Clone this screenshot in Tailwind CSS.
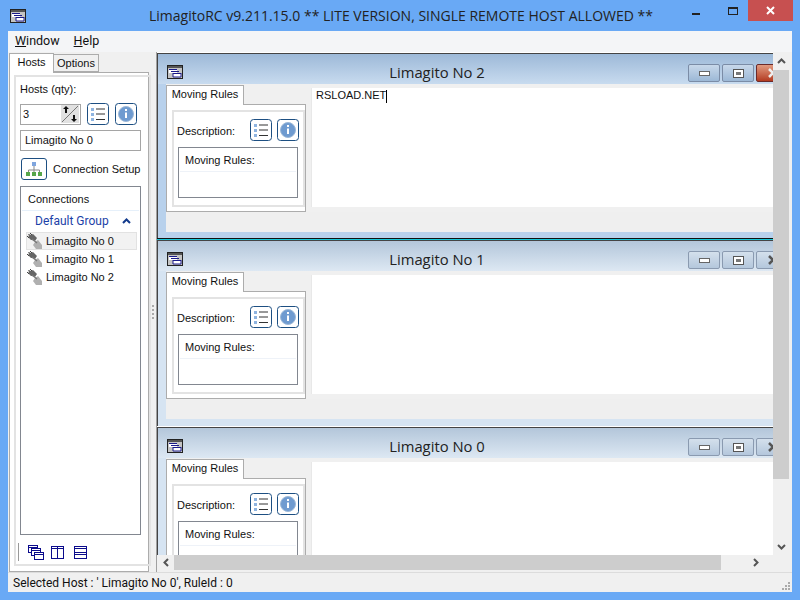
<!DOCTYPE html>
<html lang="en">
<head>
  <meta charset="UTF-8" />
  <title>LimagitoRC</title>
  <script src="https://cdn.jsdelivr.net/npm/@tailwindcss/browser@4"></script>
</head>
<body class="w-[800px] h-[600px] overflow-hidden bg-[#69a9f5] font-['Liberation_Sans',sans-serif] text-[11px] leading-none text-[#111]">
  <svg width="0" height="0" class="absolute">
    <defs>
      <symbol id="app" viewBox="0 0 16 14">
        <rect x=".5" y=".5" width="15" height="13" fill="#c4c4c4" stroke="#222"/>
        <rect x="1" y="1" width="14" height="2" fill="#555"/>
        <rect x="2" y="4" width="8" height="4" fill="#fff"/>
        <rect x="6" y="8" width="8" height="4" fill="#fff"/>
        <path d="M2 4.500h8M4 6.500h8M6 8.500h8M6 12h8" stroke="#1a1a8a"/>
        <path d="M6 8v4M14 8v4" stroke="#1a1a8a"/>
      </symbol>
      <symbol id="list" viewBox="0 0 22 22">
        <rect x=".5" y=".5" width="21" height="21" rx="3" fill="#fff" stroke="#1d4f82"/>
        <path d="M4 5h3v3H4zM4 10h3v3H4zM4 15h3v3H4z" fill="#8fb4e0"/>
        <path d="M9 6h9M9 11h9M9 16.500h9" stroke="#333"/>
      </symbol>
      <symbol id="info" viewBox="0 0 22 22">
        <rect x=".5" y=".5" width="21" height="21" rx="3" fill="#fff" stroke="#1d4f82"/>
        <circle cx="11" cy="11" r="7.500" fill="#6f9bd0" stroke="#9db9d8"/>
        <path d="M10 6h2v2h-2zM10 9.500h2V15h-2z" fill="#fff"/>
      </symbol>
      <symbol id="plug" viewBox="0 0 16 17">
        <path d="M2 1l2 1 2-1 4 4-2 3-3-1-1 0-3-3 1-1-1-2z" fill="#666"/>
        <path d="M0 3l2 2M3 0l2 2" stroke="#444"/>
        <path d="M8 9l3-2 4 5v4H9l-3-4z" fill="#b0b0b0"/>
        <path d="M5 6l5 4" stroke="#777" stroke-width="1.500"/>
      </symbol>
    </defs>
  </svg>

  <header class="h-[31px] flex items-center relative">
    <svg class="w-4 h-[14px] ml-[10px]"><use href="#app"/></svg>
    <div class="absolute left-0 right-0 top-[9px] text-center text-[14px] font-['Open_Sans'] text-[#222] pl-[2px]">LimagitoRC v9.211.15.0 ** LITE VERSION, SINGLE REMOTE HOST ALLOWED **</div>
    <div class="ml-auto flex items-start self-start mr-[7px]">
      <div class="w-[45px] h-[21px] flex items-center justify-center"><div class="w-2 h-[2px] bg-[#222] mt-[6px]"></div></div>
      <div class="w-[30px] h-[21px] flex items-center justify-center"><div class="w-[10px] h-2 border border-[#222] border-t-2"></div></div>
      <div class="w-[45px] h-[21px] bg-[#c75050] flex items-center justify-center text-white">
        <svg width="9" height="9" viewBox="0 0 9 9"><path d="M1 1l7 7M8 1l-7 7" stroke="#fff" stroke-width="2"/></svg>
      </div>
    </div>
  </header>

  <div class="mx-2 h-[561px] bg-[#f0f0f0] flex flex-col">
    <nav class="h-[21px] bg-[#f4f5f7] flex items-center pl-[7px] gap-[14px] font-['Roboto'] text-[12.5px] shrink-0">
      <span><span class="underline">W</span>indow</span>
      <span><span class="underline">H</span>elp</span>
    </nav>

    <div class="flex-1 flex min-h-0">
      <aside class="w-[141px] shrink-0 pb-[1px] flex flex-col">
        <div class="flex items-end h-[20px] pl-[1px]">
          <div class="w-[45px] h-[20px] pb-[3px] bg-white border border-b-0 border-[#acacac] flex items-center justify-center relative top-[1px] z-10">Hosts</div>
          <div class="w-[45px] h-[18px] pt-[1px] bg-[#f0f0f0] border border-l-0 border-[#acacac] flex items-center justify-center">Options</div>
        </div>
        <div class="flex-1 bg-white border border-[#acacac] ml-[1px] px-[4px] pt-[2px] pb-[5px] flex">
          <div class="flex-1 border-2 border-[#e3e3e3] px-[4px] flex flex-col">
            <div class="pt-[7px] h-[22px]">Hosts (qty):</div>
            <div class="flex items-center h-[24px] mt-[3px]">
              <div class="w-[61px] h-[21px] border border-[#a5a5a5] flex items-center pl-[2px] pr-[1px] justify-between">
                <span>3</span>
                <svg width="18" height="18" viewBox="0 0 18 18"><rect width="18" height="18" fill="#e1e1e1"/><path d="M17 1L1 17" stroke="#777"/><path d="M5 1l3 3H6v4H4V4H2zM13 17l3-3h-2v-4h-2v4h-2z" fill="#111"/></svg>
              </div>
              <svg class="w-[22px] h-[22px] ml-[6px]"><use href="#list"/></svg>
              <svg class="w-[22px] h-[22px] ml-[6px]"><use href="#info"/></svg>
            </div>
            <div class="h-[21px] mt-[4px] border border-[#a5a5a5] flex items-center pl-[4px] w-[121px]">Limagito No 0</div>
            <div class="flex items-center h-[24px] mt-[6px] w-[125px]">
              <div class="w-[26px] h-[22px] rounded-[3px] border border-[#1d4f82] flex items-center justify-center ml-[1px]">
                <svg width="18" height="16" viewBox="0 0 18 16"><path d="M9 5v4M3.500 11V9h11v2M9 9v2" stroke="#888" fill="none"/><rect x="7" y="1" width="4" height="4" fill="#7fa5dd"/><rect x="1" y="11" width="4" height="4" fill="#57a64a"/><rect x="7" y="11" width="4" height="4" fill="#57a64a"/><rect x="13" y="11" width="4" height="4" fill="#57a64a"/></svg>
              </div>
              <span class="ml-[6px] pt-[1px] whitespace-nowrap">Connection Setup</span>
            </div>
            <div class="mt-[5px] w-[121px] h-[349px] border border-[#828790] flex flex-col px-[1px]">
              <div class="h-[24px] pl-[6px] pt-[1px] flex items-center border-b border-[#e6f0fa]">Connections</div>
              <div class="h-[20px] flex items-center pl-[13px] text-[#1c3fa8] font-['Roboto'] text-[12px]">
                Default Group
                <svg class="ml-auto mr-[8px]" width="9" height="6" viewBox="0 0 9 6"><path d="M1 5l3.500-3.500L8 5" stroke="#123a8c" stroke-width="2" fill="none"/></svg>
              </div>
              <div class="mt-[1px] ml-[4px] w-[111px] h-[18px] flex items-center bg-[#f2f2f2] border border-[#e2e2e2]"><svg class="w-4 h-[17px] shrink-0"><use href="#plug"/></svg><span class="ml-[3px]">Limagito No 0</span></div>
              <div class="ml-[4px] w-[111px] h-[18px] flex items-center border border-transparent"><svg class="w-4 h-[17px] shrink-0"><use href="#plug"/></svg><span class="ml-[3px]">Limagito No 1</span></div>
              <div class="ml-[4px] w-[111px] h-[18px] flex items-center border border-transparent"><svg class="w-4 h-[17px] shrink-0"><use href="#plug"/></svg><span class="ml-[3px]">Limagito No 2</span></div>
            </div>
            <div class="flex items-center h-[24px] mt-[5px] -ml-[2px]">
              <div class="w-[1px] h-[18px] bg-[#999]"></div>
              <svg class="ml-[9px]" width="16" height="15" viewBox="0 0 16 15" fill="#fff" stroke="#0b0b8c"><rect x=".5" y=".5" width="9" height="7"/><path d="M.5 2.500h9"/><rect x="3.500" y="3.500" width="9" height="7"/><path d="M3.500 5.500h9"/><rect x="6.500" y="7.500" width="9" height="7"/><path d="M6.500 9.500h9"/></svg>
              <svg class="ml-[7px]" width="13" height="13" viewBox="0 0 13 13" fill="#fff" stroke="#0b0b8c"><rect x=".5" y=".5" width="12" height="12"/><path d="M.5 2.500h12M6.500 .5v12"/></svg>
              <svg class="ml-[10px]" width="13" height="13" viewBox="0 0 13 13" fill="#fff" stroke="#0b0b8c"><rect x=".5" y=".5" width="12" height="12"/><path d="M.5 2.500h12M.5 6.500h12M.5 8.500h12"/></svg>
            </div>
          </div>
        </div>
      </aside>

      <div class="w-[7px] shrink-0 flex items-center justify-center">
        <div class="w-[2px] h-[14px] border-l-2 border-dotted border-[#aaa]"></div>
      </div>

      <!-- mdi client -->
      <main class="flex-1 min-w-0 relative overflow-hidden border-l border-[#a0a0a0] bg-[#f0f0f0]">
        <div class="absolute left-0 top-0 w-[616px] h-[503px] bg-white overflow-hidden">

          <section class="absolute left-0 top-[1px] w-[632px] h-[185px] bg-[#b8d1ec] border-t border-l border-[#444]">
            <div class="h-[30px] bg-gradient-to-b from-[#9db9d8] to-[#c8dbef] flex items-center relative">
              <svg class="w-4 h-[14px] ml-[9px] mt-[6px]"><use href="#app"/></svg>
              <div class="absolute left-0 w-[558px] text-center top-[11px] text-[14.8px] font-['Open_Sans'] text-[#222]">Limagito No 2</div>
              <div class="absolute left-[530px] top-[10px] flex gap-[2px]">
                <div class="w-[32px] h-[18px] rounded-[2px] border border-[#7b8ca6] bg-gradient-to-b from-[#c8d8ea] to-[#9cb8d6] flex items-center justify-center"><div class="w-[11px] h-[5px] bg-white border border-[#666]"></div></div>
                <div class="w-[32px] h-[18px] rounded-[2px] border border-[#7b8ca6] bg-gradient-to-b from-[#c8d8ea] to-[#9cb8d6] flex items-center justify-center"><div class="w-[11px] h-[9px] bg-white border border-[#555] flex items-center justify-center"><div class="w-[5px] h-[3px] bg-[#777]"></div></div></div>
                <div class="w-[32px] h-[18px] rounded-[2px] border border-[#6b2a2a] bg-gradient-to-b from-[#e09a80] to-[#b33a20]"><svg class="ml-[11px] mt-[3px]" width="10" height="10" viewBox="0 0 10 10"><path d="M1 1l8 8M9 1l-8 8" stroke="#eee" stroke-width="2.500"/></svg></div>
              </div>
            </div>
            <div class="flex ml-[8px] h-[128px] bg-[#f0f0f0]">
              <div class="w-[140px] shrink-0 flex flex-col">
                <div class="h-[20px] w-[78px] pb-[2px] bg-white border border-b-0 border-[#acacac] flex items-center justify-center relative top-[1px]">Moving Rules</div>
                <div class="flex-1 bg-white border border-[#acacac] p-[5px] pb-[4px] flex">
                  <div class="flex-1 border-2 border-[#e3e3e3] px-[4px]">
                    <div class="h-[27px] flex items-center mt-[4px]"><span class="-ml-[1px] w-[73px] pt-[3px]">Description:</span><svg class="w-[22px] h-[22px]"><use href="#list"/></svg><svg class="w-[22px] h-[22px] ml-[5px]"><use href="#info"/></svg></div>
                    <div class="mt-[4px] h-[51px] w-[120px] border border-[#828790] px-[1px]"><div class="h-[24px] pl-[5px] pt-[1px] flex items-center border-b border-[#eef2f8]">Moving Rules:</div></div>
                  </div>
                </div>
              </div>
              <div class="w-[5px] shrink-0"></div>
              <div class="flex-1 mt-[4px] h-[119px] bg-white border-l border-[#e8e8e8] pl-[4px] pt-[2px]">
                <span>RSLOAD.NET</span><span class="inline-block w-[1px] h-[13px] bg-black align-middle"></span>
              </div>
            </div>
            <div class="ml-[8px] h-[20px] bg-[#efefef]"></div>
          </section>
          <div class="absolute left-0 top-[186px] w-[632px] h-[2px] bg-[#111] border-b border-[#18c8d8]"></div>

          <section class="absolute left-0 top-[188px] w-[632px] h-[186px] bg-[#d6e4f2] border-t border-l border-[#444]">
            <div class="h-[30px] bg-gradient-to-b from-[#b3c6da] to-[#dde8f3] flex items-center relative">
              <svg class="w-4 h-[14px] ml-[9px] mt-[6px]"><use href="#app"/></svg>
              <div class="absolute left-0 w-[558px] text-center top-[11px] text-[14.8px] font-['Open_Sans'] text-[#222]">Limagito No 1</div>
              <div class="absolute left-[530px] top-[10px] flex gap-[2px]">
                <div class="w-[32px] h-[18px] rounded-[2px] border border-[#8a9ab0] bg-gradient-to-b from-[#d4e0ec] to-[#b4c7dc] flex items-center justify-center"><div class="w-[11px] h-[5px] bg-white border border-[#666]"></div></div>
                <div class="w-[32px] h-[18px] rounded-[2px] border border-[#8a9ab0] bg-gradient-to-b from-[#d4e0ec] to-[#b4c7dc] flex items-center justify-center"><div class="w-[11px] h-[9px] bg-white border border-[#555] flex items-center justify-center"><div class="w-[5px] h-[3px] bg-[#777]"></div></div></div>
                <div class="w-[32px] h-[18px] rounded-[2px] border border-[#8a9ab0] bg-gradient-to-b from-[#d4e0ec] to-[#b4c7dc]"><svg class="ml-[11px] mt-[3px]" width="10" height="10" viewBox="0 0 10 10"><path d="M1 1l8 8M9 1l-8 8" stroke="#555" stroke-width="2.500"/></svg></div>
              </div>
            </div>
            <div class="flex ml-[8px] h-[128px] bg-[#f0f0f0]">
              <div class="w-[140px] shrink-0 flex flex-col">
                <div class="h-[20px] w-[78px] pb-[2px] bg-white border border-b-0 border-[#acacac] flex items-center justify-center relative top-[1px]">Moving Rules</div>
                <div class="flex-1 bg-white border border-[#acacac] p-[5px] pb-[4px] flex">
                  <div class="flex-1 border-2 border-[#e3e3e3] px-[4px]">
                    <div class="h-[27px] flex items-center mt-[4px]"><span class="-ml-[1px] w-[73px] pt-[3px]">Description:</span><svg class="w-[22px] h-[22px]"><use href="#list"/></svg><svg class="w-[22px] h-[22px] ml-[5px]"><use href="#info"/></svg></div>
                    <div class="mt-[4px] h-[51px] w-[120px] border border-[#828790] px-[1px]"><div class="h-[24px] pl-[5px] pt-[1px] flex items-center border-b border-[#eef2f8]">Moving Rules:</div></div>
                  </div>
                </div>
              </div>
              <div class="w-[5px] shrink-0"></div>
              <div class="flex-1 mt-[4px] h-[119px] bg-white border-l border-[#e8e8e8]"></div>
            </div>
            <div class="ml-[8px] h-[20px] bg-[#efefef]"></div>
          </section>

          <section class="absolute left-0 top-[375px] w-[632px] h-[186px] bg-[#d6e4f2] border-t border-l border-[#444]">
            <div class="h-[30px] bg-gradient-to-b from-[#b3c6da] to-[#dde8f3] flex items-center relative">
              <svg class="w-4 h-[14px] ml-[9px] mt-[6px]"><use href="#app"/></svg>
              <div class="absolute left-0 w-[558px] text-center top-[11px] text-[14.8px] font-['Open_Sans'] text-[#222]">Limagito No 0</div>
              <div class="absolute left-[530px] top-[10px] flex gap-[2px]">
                <div class="w-[32px] h-[18px] rounded-[2px] border border-[#8a9ab0] bg-gradient-to-b from-[#d4e0ec] to-[#b4c7dc] flex items-center justify-center"><div class="w-[11px] h-[5px] bg-white border border-[#666]"></div></div>
                <div class="w-[32px] h-[18px] rounded-[2px] border border-[#8a9ab0] bg-gradient-to-b from-[#d4e0ec] to-[#b4c7dc] flex items-center justify-center"><div class="w-[11px] h-[9px] bg-white border border-[#555] flex items-center justify-center"><div class="w-[5px] h-[3px] bg-[#777]"></div></div></div>
                <div class="w-[32px] h-[18px] rounded-[2px] border border-[#8a9ab0] bg-gradient-to-b from-[#d4e0ec] to-[#b4c7dc]"><svg class="ml-[11px] mt-[3px]" width="10" height="10" viewBox="0 0 10 10"><path d="M1 1l8 8M9 1l-8 8" stroke="#555" stroke-width="2.500"/></svg></div>
              </div>
            </div>
            <div class="flex ml-[8px] h-[128px] bg-[#f0f0f0]">
              <div class="w-[140px] shrink-0 flex flex-col">
                <div class="h-[20px] w-[78px] pb-[2px] bg-white border border-b-0 border-[#acacac] flex items-center justify-center relative top-[1px]">Moving Rules</div>
                <div class="flex-1 bg-white border border-[#acacac] p-[5px] pb-[4px] flex">
                  <div class="flex-1 border-2 border-[#e3e3e3] px-[4px]">
                    <div class="h-[27px] flex items-center mt-[4px]"><span class="-ml-[1px] w-[73px] pt-[3px]">Description:</span><svg class="w-[22px] h-[22px]"><use href="#list"/></svg><svg class="w-[22px] h-[22px] ml-[5px]"><use href="#info"/></svg></div>
                    <div class="mt-[4px] h-[51px] w-[120px] border border-[#828790] px-[1px]"><div class="h-[24px] pl-[5px] pt-[1px] flex items-center border-b border-[#eef2f8]">Moving Rules:</div></div>
                  </div>
                </div>
              </div>
              <div class="w-[5px] shrink-0"></div>
              <div class="flex-1 mt-[4px] h-[119px] bg-white border-l border-[#e8e8e8]"></div>
            </div>
          </section>
        </div>

        <!-- scrollbars -->
        <div class="absolute left-[616px] top-0 w-[16px] h-[503px] bg-[#f0f0f0] flex flex-col items-center">
          <div class="h-[18px] flex items-center shrink-0"><svg width="9" height="6" viewBox="0 0 9 6"><path d="M1 5l3.500-3.500L8 5" stroke="#555" stroke-width="2" fill="none"/></svg></div>
          <div class="w-full h-[409px] bg-[#cdcdcd]"></div>
          <div class="mt-auto h-[17px] flex items-center"><svg width="9" height="6" viewBox="0 0 9 6"><path d="M1 1l3.500 3.500L8 1" stroke="#555" stroke-width="2" fill="none"/></svg></div>
        </div>
        <div class="absolute left-0 top-[503px] w-[616px] h-[15px] bg-[#f0f0f0] flex items-center">
          <div class="w-[17px] flex justify-center"><svg width="6" height="9" viewBox="0 0 6 9"><path d="M5 1L1.500 4.500 5 8" stroke="#555" stroke-width="2" fill="none"/></svg></div>
          <div class="w-[547px] h-full bg-[#cdcdcd]"></div>
          <div class="ml-auto w-[34px] flex justify-center"><svg width="6" height="9" viewBox="0 0 6 9"><path d="M1 1l3.500 3.500L1 8" stroke="#555" stroke-width="2" fill="none"/></svg></div>
        </div>
      </main>
    </div>

    <footer class="h-[20px] shrink-0 border-t border-[#dcdcdc] bg-[#f0f0f0] flex items-center pl-[5px] relative font-['Roboto'] text-[12px]">
      Selected Host : ' Limagito No 0', RuleId : 0
      <svg class="absolute right-[1px] bottom-[1px]" width="9" height="9" viewBox="0 0 9 9" fill="#aaa"><path d="M6 0h2v2H6zM3 3h2v2H3zM6 3h2v2H6zM0 6h2v2H0zM3 6h2v2H3zM6 6h2v2H6z"/></svg>
    </footer>
  </div>
</body>
</html>
